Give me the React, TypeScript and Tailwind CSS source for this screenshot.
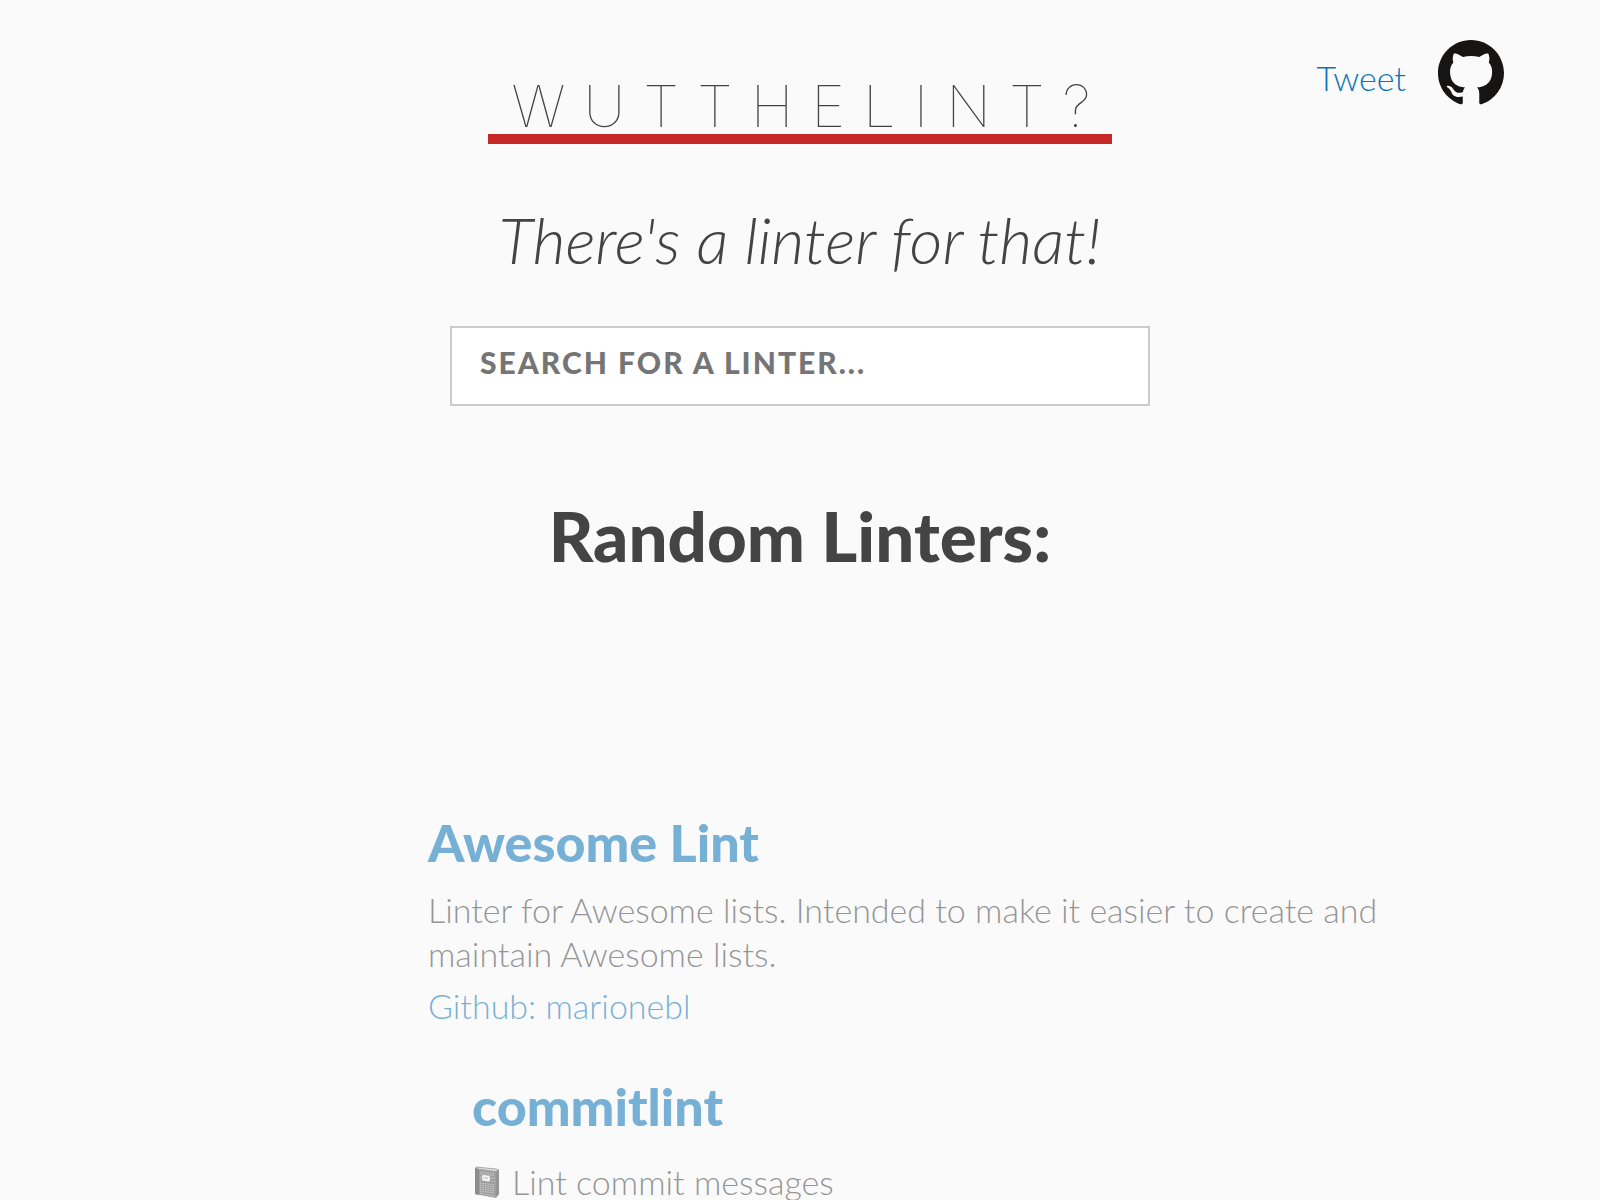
import { useState } from "react";

type Linter = { name: string; description: string; author?: string; book?: boolean };

const linters: Linter[] = [
  {
    name: "Awesome Lint",
    description:
      "Linter for Awesome lists. Intended to make it easier to create and maintain Awesome lists.",
    author: "marionebl",
  },
  { name: "commitlint", description: "Lint commit messages", book: true },
];

function GithubMark() {
  return (
    <svg viewBox="0 0 16 16" className="size-16.5 fill-[#161514]" aria-hidden="true">
      <path d="M8 0C3.58 0 0 3.58 0 8c0 3.54 2.29 6.53 5.47 7.59.4.07.55-.17.55-.38 0-.19-.01-.82-.01-1.49-2.01.37-2.53-.49-2.69-.94-.09-.23-.48-.94-.82-1.13-.28-.15-.68-.52-.01-.53.63-.01 1.08.58 1.23.82.72 1.21 1.87.87 2.33.66.07-.52.28-.87.51-1.07-1.78-.2-3.64-.89-3.64-3.95 0-.87.31-1.59.82-2.15-.08-.2-.36-1.02.08-2.12 0 0 .67-.21 2.2.82.64-.18 1.32-.27 2-.27s1.36.09 2 .27c1.53-1.04 2.2-.82 2.2-.82.44 1.1.16 1.92.08 2.12.51.56.82 1.27.82 2.15 0 3.07-1.87 3.75-3.65 3.95.29.25.54.73.54 1.48 0 1.07-.01 1.93-.01 2.2 0 .21.15.46.55.38A8.01 8.01 0 0 0 16 8c0-4.42-3.58-8-8-8Z" />
    </svg>
  );
}

function Notebook() {
  return (
    <svg viewBox="0 0 26 32" className="mr-3 ml-0.5 inline-block h-8 w-6.5 align-[-3px]" aria-hidden="true">
      <path d="M2 1 22 3v2l3-1v24l-3 4L1 28V2Z" fill="#777" />
      <path d="M2 1 22 3l3 1-3 1.500L3 3Z" fill="#ccc" stroke="#555" strokeWidth=".8" />
      <path d="M1 2l4 1v26l-4-1Z" fill="#333" />
      <path d="M22 5.500l3-1.500v24l-3 3.500Z" fill="#444" />
      <path d="M5 3.500 22 5.500v26L5 28.500Z" fill="#555" />
      <path
        d="M6 6l15 2M6 8l15 2M6 17l15 2M6 19l15 2M6 21l15 2M6 23l15 2M6 25l15 2M6 27l15 3M6 11l2 .3M6 14l2 .3M17 12l4 .5M17 15l4 .5"
        stroke="#aaa"
        strokeDasharray="1.500 1"
      />
      <path d="M8 10.500q0-1.500 1.500-1.500l5 .8q1.500.3 1.500 2v2q0 1.800-1.500 1.600l-5-.7q-1.500-.2-1.500-2Z" fill="#f2f2f2" />
      <path d="M9.500 11.500l4.500 1" stroke="#888" />
    </svg>
  );
}

function LinterCard({ linter, shifted }: { linter: Linter; shifted: boolean }) {
  return (
    <li className={shifted ? "ml-11 opacity-55" : "opacity-55"}>
      <h3 className="text-[52px]/[60px] font-black">
        <a href="#" className="text-[#0b74b8]">{linter.name}</a>
      </h3>
      <p className={linter.book ? "mt-6 text-[34px]/[44px]" : "mt-4 text-[34px]/[44px]"}>
        {linter.book && <Notebook />}
        {linter.description}
      </p>
      {linter.author && (
        <a href="#" className="mt-2 block text-[34px]/[44px] text-[#0b74b8]">
          Github: {linter.author}
        </a>
      )}
    </li>
  );
}

export default function App() {
  const [query, setQuery] = useState("");
  return (
    <div className="relative h-screen overflow-hidden bg-[#fafafa] font-['Lato','Open_Sans',sans-serif] font-light text-[#444]">
      <nav className="absolute top-10 right-24 flex items-start gap-8">
        <a href="#" className="pt-4 text-[34px]/[44px] text-[#0b74b8]">Tweet</a>
        <a href="#" aria-label="GitHub repository"><GithubMark /></a>
      </nav>
      <header className="flex flex-col items-center pt-19.5">
        <h1 className="border-b-10 border-[#c62828] pr-1 pl-6 font-['Inter',sans-serif] text-[58px]/[56px] font-thin tracking-[18px] text-[#444]">
          WUTTHELINT?
        </h1>
        <p className="mt-14 text-[64px]/[80px] italic">There's a linter for that!</p>
        <input
          type="text"
          aria-label="Search for a linter"
          value={query}
          onChange={(e) => setQuery(e.target.value)}
          placeholder="SEARCH FOR A LINTER..."
          className="mt-11.5 h-20 w-[700px] border-2 border-[#ccc] bg-white px-7 pb-2 text-[30px] font-black tracking-[2px] outline-none placeholder:text-[#757575]"
        />
      </header>
      <main>
        <h2 className="mt-22.5 text-center text-[69px]/[80px] font-black">Random Linters:</h2>
        <ul className="mt-59 mr-[12%] ml-[26.75%] flex flex-col gap-12">
          {linters.map((linter, i) => (
            <LinterCard key={linter.name} linter={linter} shifted={i > 0} />
          ))}
        </ul>
      </main>
    </div>
  );
}
